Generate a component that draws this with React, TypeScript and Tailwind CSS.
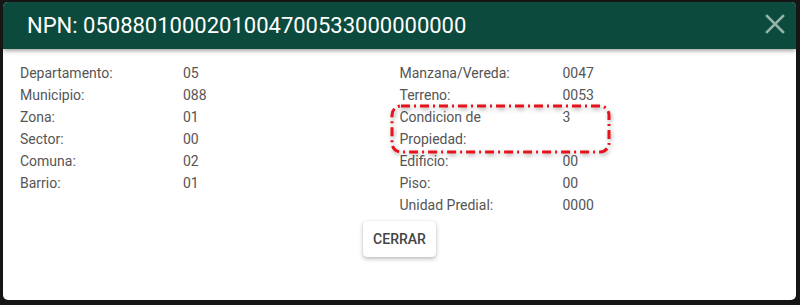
const left: [string, string][] = [
  ["Departamento:", "05"],
  ["Municipio:", "088"],
  ["Zona:", "01"],
  ["Sector:", "00"],
  ["Comuna:", "02"],
  ["Barrio:", "01"],
];

const right: [string, string][] = [
  ["Manzana/Vereda:", "0047"],
  ["Terreno:", "0053"],
  ["Condicion de Propiedad:", "3"],
  ["Edificio:", "00"],
  ["Piso:", "00"],
  ["Unidad Predial:", "0000"],
];

function Rows({ rows }: { rows: [string, string][] }) {
  return (
    <div className="flex flex-col">
      {rows.map(([k, v]) => (
        <div key={k} className="grid grid-cols-[163px_1fr] leading-[22px]">
          <div className="w-[128px]">{k}</div>
          <div>{v}</div>
        </div>
      ))}
    </div>
  );
}

export default function App() {
  return (
    <div
      className="relative h-[305px] w-[800px] overflow-hidden bg-[#151515] pt-[2px] pl-[3px]"
      style={{ fontFamily: "Roboto, 'Liberation Sans', sans-serif" }}
    >
      <div className="flex h-[298px] w-[793px] flex-col overflow-hidden rounded-[5px] bg-white">
        <div className="relative z-10 flex h-[47px] shrink-0 items-center justify-between bg-[#0b4a3d] pl-[24px] pr-[11px] shadow-[0_2px_4px_rgba(0,0,0,0.35)]">
          <h1 className="text-[22px] leading-none text-white">NPN: 0508801000201004700533000000000</h1>
          <svg width="20" height="20" viewBox="0 0 20 20" className="mt-[-4px]">
            <path d="M2 2 L18 18 M18 2 L2 18" stroke="#93b2a9" strokeWidth="2.6" strokeLinecap="square" />
          </svg>
        </div>
        <div className="grid grid-cols-2 px-[17px] pt-[13px] text-[14px] text-[#555555]">
          <Rows rows={left} />
          <Rows rows={right} />
        </div>
        <div className="flex justify-center pt-[5px]">
          <button className="h-[36px] w-[73px] rounded-[4px] bg-white text-[14px] font-medium text-[#444444] shadow-[0_2px_4px_rgba(0,0,0,0.25),0_0_1px_rgba(0,0,0,0.2)]">
            CERRAR
          </button>
        </div>
      </div>

      <svg
        className="absolute left-[389px] top-[103px] drop-shadow-[1px_2px_2px_rgba(0,0,0,0.35)]"
        width="224"
        height="52"
        viewBox="0 0 224 52"
      >
        <rect
          x="3"
          y="3"
          width="217"
          height="46"
          rx="9"
          fill="none"
          stroke="#e8121c"
          strokeWidth="3"
          strokeDasharray="9 4 2 4"
        />
      </svg>
    </div>
  );
}
